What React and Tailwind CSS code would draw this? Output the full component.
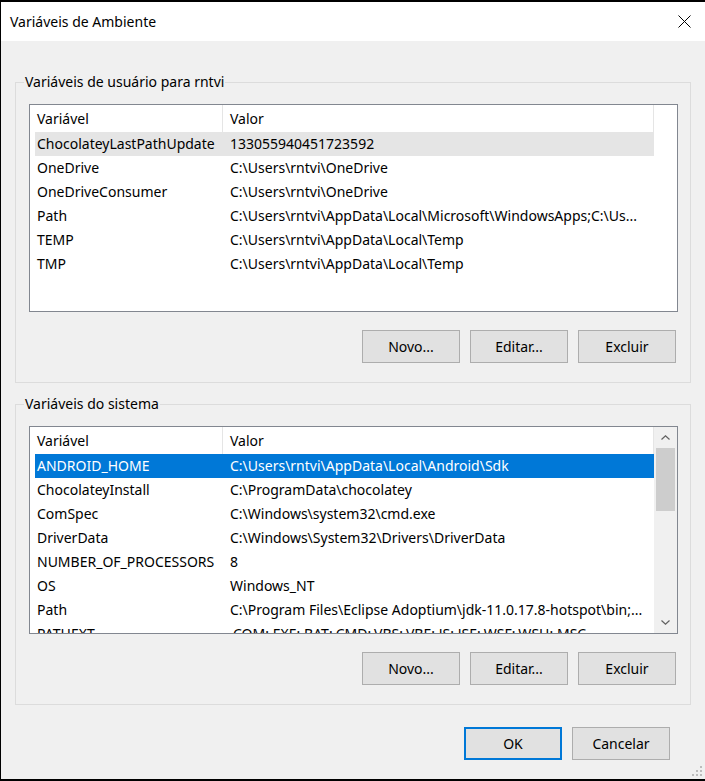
import React from "react";

const userVars = [
  ["ChocolateyLastPathUpdate", "133055940451723592"],
  ["OneDrive", "C:\\Users\\rntvi\\OneDrive"],
  ["OneDriveConsumer", "C:\\Users\\rntvi\\OneDrive"],
  ["Path", "C:\\Users\\rntvi\\AppData\\Local\\Microsoft\\WindowsApps;C:\\Us..."],
  ["TEMP", "C:\\Users\\rntvi\\AppData\\Local\\Temp"],
  ["TMP", "C:\\Users\\rntvi\\AppData\\Local\\Temp"],
];

const systemVars = [
  ["ANDROID_HOME", "C:\\Users\\rntvi\\AppData\\Local\\Android\\Sdk"],
  ["ChocolateyInstall", "C:\\ProgramData\\chocolatey"],
  ["ComSpec", "C:\\Windows\\system32\\cmd.exe"],
  ["DriverData", "C:\\Windows\\System32\\Drivers\\DriverData"],
  ["NUMBER_OF_PROCESSORS", "8"],
  ["OS", "Windows_NT"],
  ["Path", "C:\\Program Files\\Eclipse Adoptium\\jdk-11.0.17.8-hotspot\\bin;..."],
  ["PATHEXT", ".COM;.EXE;.BAT;.CMD;.VBS;.VBE;.JS;.JSE;.WSF;.WSH;.MSC"],
];

function Button({ children, primary = false }) {
  return (
    <button
      type="button"
      className={`w-[98px] h-[33px] bg-[#e1e1e1] text-black text-[14px] leading-none ${
        primary ? "border-2 border-[#0078d7]" : "border border-[#adadad]"
      }`}
    >
      {children}
    </button>
  );
}

function ScrollBar() {
  return (
    <div className="w-[23px] bg-[#f0f0f0] flex flex-col items-center">
      <div className="h-[21px] w-full flex items-center justify-center">
        <svg width="9" height="5" viewBox="0 0 9 5">
          <path d="M0.5 4.5 L4.5 0.8 L8.5 4.5" fill="none" stroke="#606060" strokeWidth="1.2" />
        </svg>
      </div>
      <div className="w-[19px] h-[63px] bg-[#cdcdcd]" />
      <div className="flex-1" />
      <div className="h-[21px] w-full flex items-center justify-center">
        <svg width="9" height="5" viewBox="0 0 9 5">
          <path d="M0.5 0.5 L4.5 4.2 L8.5 0.5" fill="none" stroke="#606060" strokeWidth="1.2" />
        </svg>
      </div>
    </div>
  );
}

function VarList({ rows, selected, selectedStyle, scroll = false }) {
  return (
    <div className="h-[208px] border border-[#828790] bg-white flex overflow-hidden">
      <div className="w-[624px] flex flex-col overflow-hidden">
        <div className="h-[27px] shrink-0 flex">
          <div className="w-[193px] border-r border-[#e5e5e5] pl-[7px] leading-[27px]">Variável</div>
          <div className="w-[431px] border-r border-[#e5e5e5] pl-[7px] leading-[27px]">Valor</div>
        </div>
        {rows.map(([name, value], i) => {
          const sel = i === selected;
          const bg = sel
            ? selectedStyle === "blue"
              ? "bg-[#0078d7] text-white"
              : "bg-[#e5e5e5]"
            : "";
          return (
            <div key={name} className={`ml-[5px] w-[619px] h-[24px] shrink-0 flex leading-[24px] whitespace-nowrap ${bg}`}>
              <div className="w-[188px] pl-[2px] overflow-hidden">{name}</div>
              <div className="flex-1 pl-[7px] overflow-hidden">{value}</div>
            </div>
          );
        })}
      </div>
      {scroll && <ScrollBar />}
    </div>
  );
}

function Group({ title, children, className = "" }) {
  return (
    <div className={`relative mx-[14px] border border-[#dcdcdc] pt-[21px] pl-[13px] pr-[12px] pb-[19px] ${className}`}>
      <span className="absolute left-[8px] -top-[11px] px-[1px] bg-[#f0f0f0] leading-[20px] text-black">
        {title}
      </span>
      {children}
      <div className="mt-[18px] pr-[2px] flex justify-end gap-[10px]">
        <Button>Novo...</Button>
        <Button>Editar...</Button>
        <Button>Excluir</Button>
      </div>
    </div>
  );
}

export default function App() {
  return (
    <div className="w-[705px] h-[781px] bg-black pt-[2px] pl-[1px] overflow-hidden font-['Noto_Sans',sans-serif] text-[14px] text-black">
      <div className="relative h-[777px] flex flex-col bg-[#f0f0f0]">
        <div className="h-[39px] shrink-0 bg-white flex items-center justify-between pl-[9px] pr-[14px]">
          <span className="text-[14px]">Variáveis de Ambiente</span>
          <svg width="13" height="13" viewBox="0 0 13 13">
            <path d="M0.5 0.5 L12.5 12.5 M12.5 0.5 L0.5 12.5" stroke="#000" strokeWidth="1" />
          </svg>
        </div>

        <Group title="Variáveis de usuário para rntvi" className="mt-[41px]">
          <VarList rows={userVars} selected={0} selectedStyle="grey" />
        </Group>

        <Group title="Variáveis do sistema" className="mt-[21px]">
          <VarList rows={systemVars} selected={0} selectedStyle="blue" scroll />
        </Group>

        <div className="mt-[22px] pr-[35px] flex justify-end gap-[10px]">
          <Button primary>OK</Button>
          <Button>Cancelar</Button>
        </div>

        {/* resize grip */}
        <svg className="absolute right-[2px] bottom-[2px]" width="12" height="12" viewBox="0 0 12 12">
          <rect x="9" y="1" width="2" height="2" fill="#bcbcbc" />
          <rect x="5" y="5" width="2" height="2" fill="#bcbcbc" />
          <rect x="9" y="5" width="2" height="2" fill="#bcbcbc" />
          <rect x="1" y="9" width="2" height="2" fill="#bcbcbc" />
          <rect x="5" y="9" width="2" height="2" fill="#bcbcbc" />
          <rect x="9" y="9" width="2" height="2" fill="#bcbcbc" />
        </svg>
      </div>
    </div>
  );
}
